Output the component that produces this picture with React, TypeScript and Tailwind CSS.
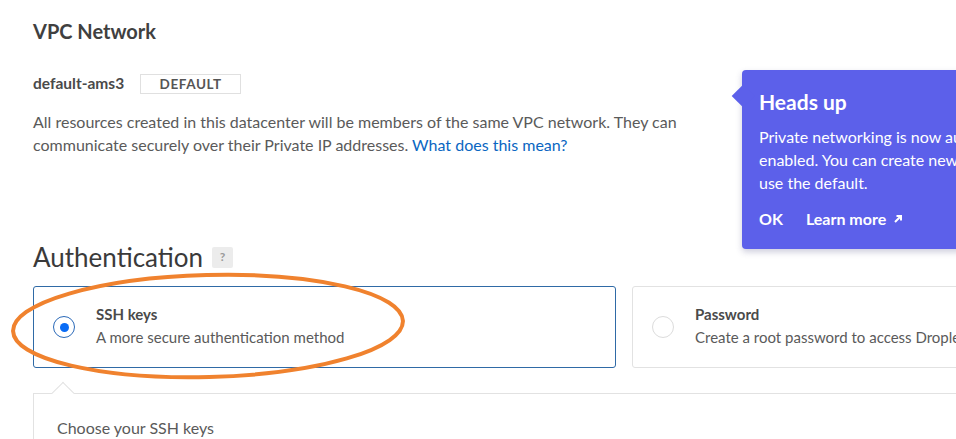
import React from "react";

function Radio({ checked }: { checked?: boolean }) {
  return (
    <span
      className={
        "flex h-[22px] w-[22px] shrink-0 items-center justify-center rounded-full border " +
        (checked ? "border-[#2a69b8]" : "border-[#dcdcdc]")
      }
    >
      {checked && <span className="h-[9px] w-[9px] rounded-full bg-[#0a6cf5]" />}
    </span>
  );
}

function AuthOption({ title, desc, checked }: { title: string; desc: string; checked?: boolean }) {
  return (
    <div
      className={
        "flex h-[82px] w-[583px] shrink-0 items-center gap-[21px] rounded-[3px] border pl-[19px] " +
        (checked ? "border-[#2f6aa6]" : "border-[#e2e2e2]")
      }
    >
      <Radio checked={checked} />
      <div className="flex flex-col gap-[3px] pb-[3px]">
        <p className="text-[15px] font-bold leading-[20px] text-[#4a4a4a]">{title}</p>
        <p className="whitespace-nowrap text-[15px] leading-[20px] text-[#5a5a5a]">{desc}</p>
      </div>
    </div>
  );
}

export default function App() {
  return (
    <div className="relative h-[439px] w-[956px] overflow-hidden bg-white font-['Lato',sans-serif]">
      <div className="w-[1300px] pl-[33px] pt-[19px]">
        <h2 className="text-[20px] font-bold leading-[24px] text-[#404040]">VPC Network</h2>

        <div className="mt-[29px] flex items-center gap-[16px]">
          <span className="text-[15.5px] font-bold text-[#4a4a4a]">default-ams3</span>
          <span className="flex h-[20px] w-[101px] items-center justify-center border border-[#e0e0e0] text-[13.5px] font-bold tracking-[0.6px] text-[#555]">
            DEFAULT
          </span>
        </div>

        <p className="mt-[15px] w-[700px] text-[16px] leading-[23px] text-[#5a5a5a]">
          All resources created in this datacenter will be members of the same VPC network. They can
          <br />
          communicate securely over their Private IP addresses.{" "}
          <a className="text-[#0a66c2]">What does this mean?</a>
        </p>

        <div className="mt-[85px] flex items-center gap-[9px]">
          <h2 className="text-[26px] leading-[32px] text-[#3a3a3a]">Authentication</h2>
          <span className="flex h-[21px] w-[21px] items-center justify-center rounded-[2px] bg-[#ececec] text-[12px] font-bold text-[#9a9a9a]">
            ?
          </span>
        </div>

        <div className="mt-[13px] flex gap-[16px]">
          <AuthOption checked title="SSH keys" desc="A more secure authentication method" />
          <AuthOption title="Password" desc="Create a root password to access Droplet (less secure)" />
        </div>

        <div className="relative mt-[25px] h-[80px] border border-[#e2e2e2] px-[23px] pt-[22px]">
          <span className="absolute left-[21px] top-[-9px] h-[16px] w-[16px] rotate-45 border-l border-t border-[#e2e2e2] bg-white" />
          <p className="text-[16px] text-[#5a5a5a]">Choose your SSH keys</p>
        </div>
      </div>

      {/* Heads up popover */}
      <div className="absolute left-[742px] top-[70px] h-[179px] w-[330px] rounded-[4px] bg-[#5c60ea] px-[17px] pt-[19px] shadow-[0_3px_6px_rgba(60,60,120,0.25)]">
        <span className="absolute left-[-7px] top-[18px] h-[16px] w-[16px] rotate-45 bg-[#5c60ea]" />
        <p className="text-[21px] font-bold leading-[26px] text-white">Heads up</p>
        <p className="mt-[10px] whitespace-nowrap text-[16px] leading-[23px] text-white">
          Private networking is now automatically
          <br />
          enabled. You can create new VPCs or
          <br />
          use the default.
        </p>
        <div className="mt-[13px] flex items-center gap-[23px] text-[16px] font-bold text-white">
          <span>OK</span>
          <span className="flex items-center gap-[7px]">
            Learn more
            <svg width="10" height="10" viewBox="0 0 10 10" fill="none" stroke="white" strokeWidth="2">
              <path d="M2 8L8 2M3.5 2H8V6.5" />
            </svg>
          </span>
        </div>
      </div>

      {/* hand-drawn annotation */}
      <svg className="pointer-events-none absolute left-0 top-0" width="956" height="439">
        <ellipse
          cx="208"
          cy="326"
          rx="195"
          ry="51"
          transform="rotate(-1.5 208 326)"
          fill="none"
          stroke="#f0822e"
          strokeWidth="4"
        />
      </svg>
    </div>
  );
}
